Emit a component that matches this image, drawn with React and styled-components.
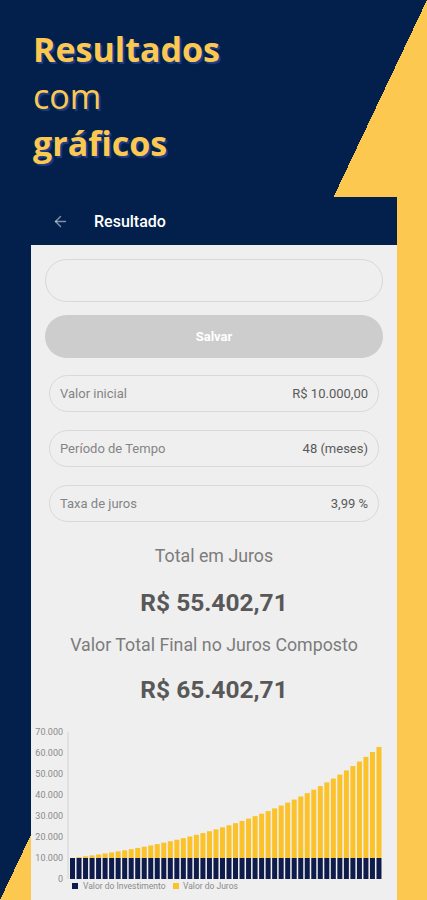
import React from "react";
import styled, { createGlobalStyle } from "styled-components";
import { ArrowLeft } from "lucide-react";

const NAVY = "#02204b";
const YELLOW = "#fdc84f";

const rows = [
	{ label: "Valor inicial", value: "R$ 10.000,00" },
	{ label: "Período de Tempo", value: "48 (meses)" },
	{ label: "Taxa de juros", value: "3,99 %" },
];

// 48 meses, juros de 3,99% ao mês sobre 10.000
const months = Array.from({ length: 48 }, (_, n) => 10000 * Math.pow(1.0399, n));

const Chart = () => {
	const zero = 156;
	const scale = 0.0021;
	const slot = 313 / 48;
	const ticks = [0, 10000, 20000, 30000, 40000, 50000, 60000, 70000];

	return (
		<ChartSvg width="366" height="175" viewBox="0 0 366 175">
			{ticks.map((t) => (
				<text
					key={t}
					x="32"
					y={zero - t * scale + 3}
					textAnchor="end"
					fontSize="9"
					fill="#8a8a8a"
				>
					{t === 0 ? "0" : t.toLocaleString("pt-BR")}
				</text>
			))}
			<line x1="37" y1="9" x2="37" y2={zero} stroke="#d2d2d2" strokeWidth="1" />
			{months.map((total, i) => {
				const x = 39 + i * slot;
				const base = 10000 * scale;
				const top = total * scale;
				return (
					<g key={i}>
						<rect x={x} y={zero - base} width="5" height={base} fill="#0e1b4b" />
						<rect x={x} y={zero - top} width="5" height={top - base} fill="#fcc22a" />
					</g>
				);
			})}
			<rect x="41" y="160" width="6" height="6" fill="#0e1b4b" />
			<text x="52" y="166" fontSize="8.5" fill="#8a8a8a">
				Valor do Investimento
			</text>
			<rect x="142" y="160" width="6" height="6" fill="#fcc22a" />
			<text x="152" y="166" fontSize="8.5" fill="#8a8a8a">
				Valor do Juros
			</text>
		</ChartSvg>
	);
};

const App = () => {
	return (
		<Page>
			<GlobalStyle />
			<Headline>
				<Strong>Resultados</Strong>
				<span>com</span>
				<Strong>gráficos</Strong>
			</Headline>

			<Phone>
				<Toolbar>
					<ArrowLeft size={17} color="rgba(255,255,255,0.5)" strokeWidth={2} />
					<ToolbarTitle>Resultado</ToolbarTitle>
				</Toolbar>
				<Panel>
					<Form>
						<Input />
						<SaveButton>Salvar</SaveButton>
						<Rows>
							{rows.map((row) => (
								<InfoRow key={row.label}>
									<span>{row.label}</span>
									<Value>{row.value}</Value>
								</InfoRow>
							))}
						</Rows>
					</Form>

					<Caption $top={24}>Total em Juros</Caption>
					<Amount $top={22}>R$ 55.402,71</Amount>
					<Caption $top={17}>Valor Total Final no Juros Composto</Caption>
					<Amount $top={20}>R$ 65.402,71</Amount>

					<Chart />
				</Panel>
			</Phone>
		</Page>
	);
};

const GlobalStyle = createGlobalStyle`
	* { box-sizing: border-box; }
	body {
		margin: 0;
		font-family: Roboto, "Liberation Sans", sans-serif;
	}
`;

const Page = styled.div`
	width: 427px;
	height: 900px;
	overflow: hidden;
	background: linear-gradient(to bottom right, ${NAVY} 50%, ${YELLOW} 50%);
	display: flex;
	flex-direction: column;
`;

const Headline = styled.h1`
	margin: 0;
	padding: 26px 0 0 33px;
	display: flex;
	flex-direction: column;
	font-family: "Open Sans", sans-serif;
	font-size: 34px;
	font-weight: 400;
	line-height: 47px;
	color: ${YELLOW};
	text-shadow: 2px 2px 1px #1f3f86;
`;

const Strong = styled.span`
	font-weight: 700;
`;

const Phone = styled.div`
	margin: 30px 0 0 31px;
	width: 366px;
	display: flex;
	flex-direction: column;
	flex: 1;
`;

const Toolbar = styled.div`
	height: 48px;
	background: ${NAVY};
	display: flex;
	align-items: center;
	padding-left: 21px;
	gap: 25px;
`;

const ToolbarTitle = styled.span`
	color: #fff;
	font-size: 16px;
	font-weight: 500;
`;

const Panel = styled.div`
	flex: 1;
	background: #efefef;
	padding-top: 14px;
	display: flex;
	flex-direction: column;
	align-items: center;
`;

const Form = styled.div`
	width: 100%;
	padding: 0 14px;
	display: flex;
	flex-direction: column;
	gap: 13px;
`;

const Input = styled.div`
	height: 43px;
	border: 1px solid #d8d8d8;
	border-radius: 22px;
`;

const SaveButton = styled.div`
	height: 43px;
	border-radius: 22px;
	background: #cdcdcd;
	color: #fff;
	font-size: 13px;
	font-weight: 700;
	display: flex;
	align-items: center;
	justify-content: center;
`;

const Rows = styled.div`
	margin: 4px 4px 0;
	display: flex;
	flex-direction: column;
	gap: 18px;
`;

const InfoRow = styled.div`
	height: 37px;
	border: 1px solid #d9d9d9;
	border-radius: 19px;
	padding: 0 10px;
	display: flex;
	align-items: center;
	justify-content: space-between;
	font-size: 13px;
	color: #858585;
`;

const Value = styled.span`
	color: #5a5a5a;
`;

const Caption = styled.div`
	margin-top: ${(p) => p.$top}px;
	font-size: 17.8px;
	line-height: 20px;
	color: #7c7c7c;
`;

const Amount = styled.div`
	margin-top: ${(p) => p.$top}px;
	font-size: 24.5px;
	line-height: 30px;
	font-weight: 700;
	color: #585858;
`;

const ChartSvg = styled.svg`
	display: block;
	margin-top: 18px;
	flex-shrink: 0;
	font-family: Roboto, sans-serif;
`;

export default App;
